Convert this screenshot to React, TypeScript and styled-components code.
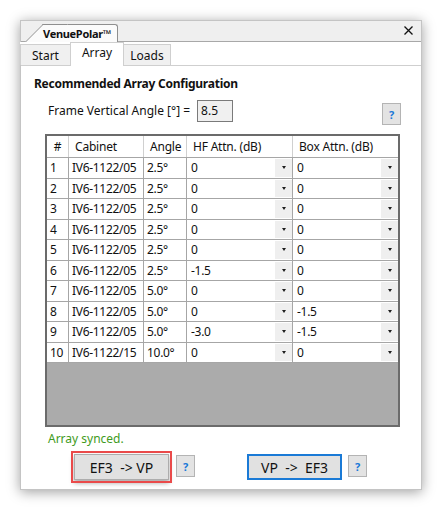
import React from "react";
import styled, { createGlobalStyle, css } from "styled-components";

const GlobalStyle = createGlobalStyle`
  html, body { margin: 0; padding: 0; background: #ffffff; }
  body { font-family: "Noto Sans", "Open Sans", sans-serif; color: #111; }
  * { box-sizing: border-box; }
`;

const Page = styled.div`
  padding: 20px 0 0 20px;
  width: 442px;
  height: 510px;
`;

const Window = styled.div`
  width: 402px;
  height: 470px;
  display: flex;
  flex-direction: column;
  background: #f0f0f0;
  border: 1px solid #c4c4c4;
  box-shadow: 0 2px 12px rgba(0, 0, 0, 0.38);
`;

const TitleBar = styled.div`
  height: 21px;
  display: flex;
  align-items: flex-end;
  justify-content: space-between;
  padding: 0 8px 0 21px;
  border-bottom: 1px solid #a8a8a8;
  background: #efefef;
`;

const TitleTab = styled.div`
  position: relative;
  z-index: 0;
  height: 18px;
  margin-bottom: -1px;
  padding: 0 6px 0 1px;
  display: flex;
  align-items: center;
  font-size: 11px;
  letter-spacing: -0.3px;
  font-weight: 700;
  color: #111;
  background: #fbfbfb;
  border-top: 1px solid #8f8f8f;
  border-right: 1px solid #8f8f8f;
  border-top-right-radius: 3px;

  &::before {
    content: "";
    position: absolute;
    z-index: -1;
    top: -1px;
    bottom: 0;
    left: -17px;
    width: 24px;
    background: #fbfbfb;
    border-left: 1px solid #8f8f8f;
    border-top: 1px solid #8f8f8f;
    transform: skewX(-45deg);
    transform-origin: bottom left;
  }
`;

const CloseGlyph = styled.svg`
  width: 9px;
  height: 9px;
  margin-bottom: 6px;
`;

const TabStrip = styled.div`
  height: 23px;
  display: flex;
  align-items: flex-end;
  background: #ffffff;
  margin-left: -1px;
`;

const Tab = styled.div<{ $active?: boolean }>`
  height: 21px;
  display: flex;
  align-items: center;
  justify-content: center;
  font-size: 12px;
  color: #111;
  background: #f0f0f0;
  border: 1px solid #cfcfcf;
  border-bottom: none;
  margin-right: -1px;
  ${(p) =>
    p.$active &&
    css`
      position: relative;
      z-index: 1;
      height: 24px;
      margin-bottom: -1px;
      padding-bottom: 4px;
      background: #ffffff;
    `}
`;

const Panel = styled.div`
  flex: 1;
  display: flex;
  flex-direction: column;
  align-items: flex-start;
  background: #ffffff;
  border-top: 1px solid #cfcfcf;
  padding: 10px 20px 0 13px;
`;

const Heading = styled.div`
  font-size: 12px;
  letter-spacing: -0.25px;
  font-weight: 700;
  line-height: 16px;
  color: #111;
`;

const AngleRow = styled.div`
  align-self: stretch;
  margin: 8px 0 0 14px;
  height: 25px;
  display: flex;
  align-items: flex-start;
`;

const AngleLabel = styled.span`
  font-size: 12px;
  line-height: 22px;
  color: #111;
  margin-right: 7px;
`;

const AngleInput = styled.div`
  width: 36px;
  height: 22px;
  padding-left: 3px;
  font-size: 12px;
  line-height: 20px;
  color: #111;
  background: #f0f0f0;
  border: 1px solid #7a7a7a;
`;

const Spacer = styled.div`
  flex: 1;
`;

const HelpButton = styled.div<{ $offset?: number }>`
  width: 19px;
  height: 22px;
  margin-top: ${(p) => p.$offset ?? 0}px;
  display: flex;
  align-items: center;
  justify-content: center;
  font-size: 11px;
  font-weight: 700;
  color: #1a78d8;
  background: #e3e3e3;
  border: 1px solid #b4b4b4;
`;

const GridFrame = styled.div`
  margin: 9px 0 0 11px;
  width: 355px;
  height: 293px;
  background: #ababab;
  border: 2px solid #6b6b6b;
`;

const columns = "22px 75px 43px 106px 1fr";

const HeaderRow = styled.div`
  display: grid;
  grid-template-columns: ${columns};
  height: 22px;
  background: #ffffff;
  border-bottom: 1px solid #a6a6a6;
`;

const HeaderCell = styled.div<{ $center?: boolean }>`
  display: flex;
  align-items: center;
  justify-content: ${(p) => (p.$center ? "center" : "flex-start")};
  padding-left: ${(p) => (p.$center ? 0 : 6)}px;
  font-size: 12px;
  letter-spacing: -0.2px;
  color: #111;
  border-right: 1px solid #d0d0d0;
  white-space: nowrap;
  &:last-child { border-right: none; }
`;

const DataRow = styled.div`
  display: grid;
  grid-template-columns: ${columns};
  height: 20.5px;
  background: #ffffff;
  border-bottom: 1px solid #a6a6a6;
`;

const Cell = styled.div`
  display: flex;
  align-items: center;
  padding-left: 3px;
  font-size: 12px;
  letter-spacing: -0.3px;
  color: #111;
  border-right: 1px solid #a6a6a6;
  white-space: nowrap;
  overflow: hidden;
  &:last-child { border-right: none; }
`;

const ComboCell = styled(Cell)`
  padding-left: 4px;
  justify-content: space-between;
`;

const DropButton = styled.div`
  width: 17px;
  align-self: stretch;
  margin: 1px 0;
  display: flex;
  align-items: center;
  justify-content: center;
  background: #efefef;

  &::after {
    content: "";
    border-left: 2.5px solid transparent;
    border-right: 2.5px solid transparent;
    border-top: 3px solid #1e1e1e;
  }
`;

const Status = styled.div`
  margin: 4px 0 0 14px;
  font-size: 12px;
  line-height: 16px;
  color: #3f9b22;
`;

const ActionRow = styled.div`
  margin: 7px 0 0 40px;
  display: flex;
  align-items: flex-start;
`;

const ActionButton = styled.div<{ $tone: "red" | "blue" }>`
  width: 95px;
  height: 26px;
  display: flex;
  align-items: center;
  justify-content: center;
  font-size: 14px;
  color: #111;
  white-space: pre;
  background: #e1e1e1;
  ${(p) =>
    p.$tone === "red"
      ? css`
          border: 1px solid #adadad;
          outline: 2px solid #ea4a4a;
          outline-offset: 1px;
          box-shadow: 0 3px 5px rgba(0, 0, 0, 0.35);
          margin-right: 7px;
        `
      : css`
          border: 2px solid #1a7ad6;
          margin-left: 52px;
          margin-right: 6px;
        `}
`;

type Row = [string, string, string, string, string];

const rows: Row[] = [
  ["1", "IV6-1122/05", "2.5°", "0", "0"],
  ["2", "IV6-1122/05", "2.5°", "0", "0"],
  ["3", "IV6-1122/05", "2.5°", "0", "0"],
  ["4", "IV6-1122/05", "2.5°", "0", "0"],
  ["5", "IV6-1122/05", "2.5°", "0", "0"],
  ["6", "IV6-1122/05", "2.5°", "-1.5", "0"],
  ["7", "IV6-1122/05", "5.0°", "0", "0"],
  ["8", "IV6-1122/05", "5.0°", "0", "-1.5"],
  ["9", "IV6-1122/05", "5.0°", "-3.0", "-1.5"],
  ["10", "IV6-1122/15", "10.0°", "0", "0"],
];

export default function App() {
  return (
    <Page>
      <GlobalStyle />
      <Window>
        <TitleBar>
          <TitleTab>VenuePolar™</TitleTab>
          <CloseGlyph viewBox="0 0 9 9">
            <path d="M0.5 0.5 L8.5 8.5 M8.5 0.5 L0.5 8.5" stroke="#111" strokeWidth="1.3" />
          </CloseGlyph>
        </TitleBar>
        <TabStrip>
          <Tab style={{ width: 51 }}>Start</Tab>
          <Tab $active style={{ width: 54 }}>Array</Tab>
          <Tab style={{ width: 48 }}>Loads</Tab>
        </TabStrip>
        <Panel>
          <Heading>Recommended Array Configuration</Heading>
          <AngleRow>
            <AngleLabel>Frame Vertical Angle [°] =</AngleLabel>
            <AngleInput>8.5</AngleInput>
            <Spacer />
            <HelpButton $offset={3}>?</HelpButton>
          </AngleRow>
          <GridFrame>
            <HeaderRow>
              <HeaderCell $center>#</HeaderCell>
              <HeaderCell>Cabinet</HeaderCell>
              <HeaderCell>Angle</HeaderCell>
              <HeaderCell>HF Attn. (dB)</HeaderCell>
              <HeaderCell>Box Attn. (dB)</HeaderCell>
            </HeaderRow>
            {rows.map((r) => (
              <DataRow key={r[0]}>
                <Cell>{r[0]}</Cell>
                <Cell>{r[1]}</Cell>
                <Cell>{r[2]}</Cell>
                <ComboCell>
                  <span>{r[3]}</span>
                  <DropButton />
                </ComboCell>
                <ComboCell>
                  <span>{r[4]}</span>
                  <DropButton />
                </ComboCell>
              </DataRow>
            ))}
          </GridFrame>
          <Status>Array synced.</Status>
          <ActionRow>
            <ActionButton $tone="red">{"EF3  -> VP"}</ActionButton>
            <HelpButton $offset={1}>?</HelpButton>
            <ActionButton $tone="blue">{"VP  ->  EF3"}</ActionButton>
            <HelpButton $offset={1}>?</HelpButton>
          </ActionRow>
        </Panel>
      </Window>
    </Page>
  );
}
